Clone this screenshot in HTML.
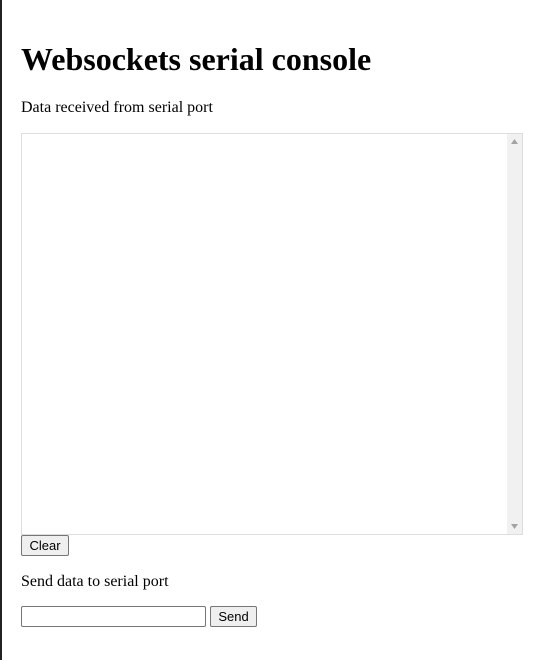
<!DOCTYPE html>
<html><head><style>
body{margin:0;width:549px;height:660px;background:#fff;font-family:"Liberation Serif",serif;position:relative;overflow:hidden}
.l{position:absolute;left:0;top:0;width:2px;height:660px;background:#222}
h1{position:absolute;left:21px;top:41px;margin:0;font-size:32px;line-height:37px;font-weight:bold}
.t{position:absolute;left:21px;font-size:16px;line-height:18px}
.ta{position:absolute;left:21px;top:133px;width:500px;height:400px;border:1px solid #ddd}
.sb{position:absolute;right:0;top:0;width:15px;height:400px;background:#f1f1f1}
.btn{position:absolute;font-family:"Liberation Sans",sans-serif;font-size:13px;background:#efefef;border:1px solid #767676;border-radius:2px;box-sizing:border-box;text-align:center;line-height:19px;height:21px}
.in{position:absolute;left:21px;top:606px;width:185px;height:21px;box-sizing:border-box;border:1px solid #767676;border-radius:2px}
</style></head><body>
<div class="l"></div>
<h1>Websockets serial console</h1>
<div class="t" style="top:99px">Data received from serial port</div>
<div class="ta"><div class="sb">
<svg width="15" height="400" style="position:absolute;left:0;top:0"><polygon points="4,10 11,10 7.5,5" fill="#a3a3a3"/><polygon points="4,390 11,390 7.5,395" fill="#a3a3a3"/></svg>
</div></div>
<div class="btn" style="left:21px;top:535px;width:48px">Clear</div>
<div class="t" style="top:573px">Send data to serial port</div>
<div class="in"></div>
<div class="btn" style="left:210px;top:606px;width:47px">Send</div>
</body></html>
